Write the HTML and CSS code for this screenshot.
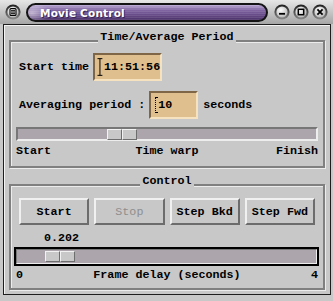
FILE: index.html
```html
<!DOCTYPE html>
<html lang="en">
<head>
    <meta charset="UTF-8">
    <title>Movie Control</title>
    <link rel="stylesheet" href="styles.css">
</head>
<body>
    <!-- gradients shared by the title bar knobs -->
    <svg class="defs" width="0" height="0">
        <defs>
            <linearGradient id="ring" x1="0" y1="0" x2="0" y2="1">
                <stop offset="0" stop-color="#1c1c1c"/>
                <stop offset="1" stop-color="#8a8a8a"/>
            </linearGradient>
            <radialGradient id="face" cx="0.4" cy="0.35" r="0.7">
                <stop offset="0" stop-color="#ffffff"/>
                <stop offset="1" stop-color="#b4b4b4"/>
            </radialGradient>
        </defs>
    </svg>

    <!-- Barra de titulo -->
    <div class="titlebar">
        <svg class="knob" viewBox="0 0 16 16">
            <circle cx="8" cy="8" r="7.6" fill="url(#ring)"/>
            <circle cx="8" cy="8" r="5.6" fill="url(#face)"/>
            <rect x="5" y="4.6" width="6" height="6.8" rx="1" fill="none" stroke="#000" stroke-width="1.1"/>
            <path d="M6 6.6h4M6 8h4M6 9.4h4" stroke="#000" stroke-width="0.9"/>
        </svg>
        <div class="title"><span>Movie Control</span></div>
        <svg class="knob" viewBox="0 0 16 16">
            <circle cx="8" cy="8" r="7.6" fill="url(#ring)"/>
            <circle cx="8" cy="8" r="5.6" fill="url(#face)"/>
            <path d="M5 9.8h6" stroke="#000" stroke-width="1.8"/>
        </svg>
        <svg class="knob" viewBox="0 0 16 16">
            <circle cx="8" cy="8" r="7.6" fill="url(#ring)"/>
            <circle cx="8" cy="8" r="5.6" fill="url(#face)"/>
            <rect x="5.3" y="5.3" width="5.4" height="5.4" fill="none" stroke="#000" stroke-width="1.5"/>
        </svg>
        <svg class="knob" viewBox="0 0 16 16">
            <circle cx="8" cy="8" r="7.6" fill="url(#ring)"/>
            <circle cx="8" cy="8" r="5.6" fill="url(#face)"/>
            <path d="M5.4 5.4l5.2 5.2M10.6 5.4l-5.2 5.2" stroke="#000" stroke-width="1.8"/>
        </svg>
    </div>

    <div class="client">
        <!-- Periodo -->
        <fieldset class="group">
            <legend>Time/Average Period</legend>
            <div class="row">
                <span class="label">Start time</span>
                <div class="entry entry-time">
                    <svg class="ibeam" width="6" height="18" viewBox="0 0 6 18">
                        <path d="M0.5 0.5h5M3 0.5v17M0.5 17.5h5" stroke="#000" stroke-width="1"/>
                    </svg>
                    <span>11:51:56</span>
                </div>
            </div>
            <div class="row">
                <span class="label">Averaging period :</span>
                <div class="entry entry-avg">
                    <span class="caret"></span>
                    <span>10</span>
                </div>
                <span class="label">seconds</span>
            </div>
            <div class="scale">
                <div class="trough trough-time">
                    <div class="handle"><span></span><span></span></div>
                </div>
            </div>
            <div class="ticks">
                <span>Start</span>
                <span>Time warp</span>
                <span class="end">Finish</span>
            </div>
        </fieldset>

        <!-- Controle -->
        <fieldset class="group group-control">
            <legend>Control</legend>
            <div class="buttons">
                <button>Start</button>
                <button disabled>Stop</button>
                <button>Step Bkd</button>
                <button>Step Fwd</button>
            </div>
            <div class="value">0.202</div>
            <div class="scale scale-focus">
                <div class="trough trough-delay">
                    <div class="handle"><span></span><span></span></div>
                </div>
            </div>
            <div class="ticks">
                <span>0</span>
                <span>Frame delay (seconds)</span>
                <span class="end">4</span>
            </div>
        </fieldset>
    </div>
</body>
</html>
```

FILE: styles.css
```css
/* Estilo Global */
* {
    box-sizing: border-box;
}

body {
    margin: 0;
    width: 333px;
    height: 301px;
    overflow: hidden;
    background: #c8c8c8;
    font-family: 'Liberation Mono', 'DejaVu Sans Mono', monospace;
    font-weight: bold;
    font-size: 11.7px;
    line-height: 14px;
    color: #000;
}

.defs {
    position: absolute;
}

/* Barra de titulo */
.titlebar {
    height: 24px;
    display: flex;
    align-items: center;
    padding: 0 5px;
    background: linear-gradient(#e6e6e6, #a6a6a6);
}

.knob {
    width: 16px;
    height: 16px;
    flex: none;
}

.title {
    width: 242px;
    height: 19px;
    margin: 1px 6px 0 5px;
    border: 2px solid #141414;
    border-radius: 10px;
    padding-left: 12px;
    display: flex;
    align-items: center;
    background:
        repeating-linear-gradient(to bottom, rgba(255, 255, 255, 0.09) 0 1px, transparent 1px 2px),
        radial-gradient(ellipse 18px 10px at 4px 8px, rgba(255, 255, 255, 0.55), transparent),
        linear-gradient(to bottom, #b9a8d2 0%, #8469a6 30%, #6a4e8c 62%, #4b3268 100%);
}

.title span {
    font-family: 'DejaVu Sans', sans-serif;
    font-size: 10.5px;
    font-weight: bold;
    letter-spacing: 0.2px;
    color: #fff;
    text-shadow: 1px 1px 0 #3a2558;
}

.titlebar .knob + .knob {
    margin-left: 3px;
}

/* Area da janela */
.client {
    height: 271px;
    margin: 0 2px 0 3px;
    padding: 5px 5px 0 5px;
    border: 1px solid #1e1e1e;
    box-shadow: inset 1px 1px 0 #f4f4f4;
}

.group {
    margin: 0;
    padding: 1px 4px 8px 4px;
    border: 2px solid #808080;
    box-shadow: inset 1px 1px 0 #ececec, 1px 1px 0 #ececec;
}

.group legend {
    margin: 0 auto;
    padding: 0 2px 8px 2px;
    background: #c8c8c8;
}

.group-control {
    margin-top: 6px;
    padding-top: 2px;
    padding-bottom: 6px;
}

.row {
    display: flex;
    align-items: center;
    gap: 4px;
    height: 28px;
    padding-left: 4px;
}

.row + .row {
    margin-top: 10px;
}

.entry {
    height: 28px;
    display: flex;
    align-items: center;
    background: #e0bf8e;
    border: 2px solid;
    border-color: #7e6646 #f7e2c0 #f7e2c0 #7e6646;
}

.entry-time {
    width: 69px;
    padding-left: 2px;
}

.entry-time .ibeam {
    margin-right: 1px;
}

.entry-avg {
    width: 49px;
    padding-left: 4px;
    margin-right: 1px;
}

.caret {
    width: 3px;
    height: 16px;
    margin-right: 0;
    border-left: 1px dotted #000;
    border-top: 1px solid #000;
    border-bottom: 1px solid #000;
}

/* Escalas */
.scale {
    margin: 8px 1px 0 1px;
}

.trough {
    height: 14px;
    display: flex;
    background: #aca5ac;
    border: 2px solid;
    border-color: #777 #ededed #ededed #777;
    padding: 0 0 0 89px;
}

.handle {
    display: flex;
    height: 11px;
}

.handle span {
    width: 15px;
    height: 11px;
    background: #c8c8c8;
    border: 1px solid;
    border-color: #f2f2f2 #6e6e6e #6e6e6e #f2f2f2;
}

.ticks {
    display: grid;
    grid-template-columns: 1fr auto 1fr;
    margin: 3px 1px 0 1px;
}

.ticks .end {
    justify-self: end;
}

/* Botoes */
.buttons {
    display: grid;
    grid-template-columns: repeat(4, 1fr);
    gap: 5px;
    margin: 0 4px;
}

.buttons button {
    height: 27px;
    padding: 0;
    font: inherit;
    color: #000;
    background: #c8c8c8;
    border: 2px solid;
    border-color: #f0f0f0 #6c6c6c #6c6c6c #f0f0f0;
}

.buttons button:disabled {
    color: #8e8e8e;
    font-weight: normal;
}

.value {
    margin-top: 6px;
    padding-left: 29px;
}

.scale-focus {
    margin: 2px 0 0 -1px;
    border: 2px solid #000;
}

.trough-delay {
    height: 15px;
    border-width: 1px;
    padding: 1px 0 0 28px;
}

.trough-delay .handle span {
    height: 11px;
}

.group-control .ticks {
    margin-top: 2px;
}
```
